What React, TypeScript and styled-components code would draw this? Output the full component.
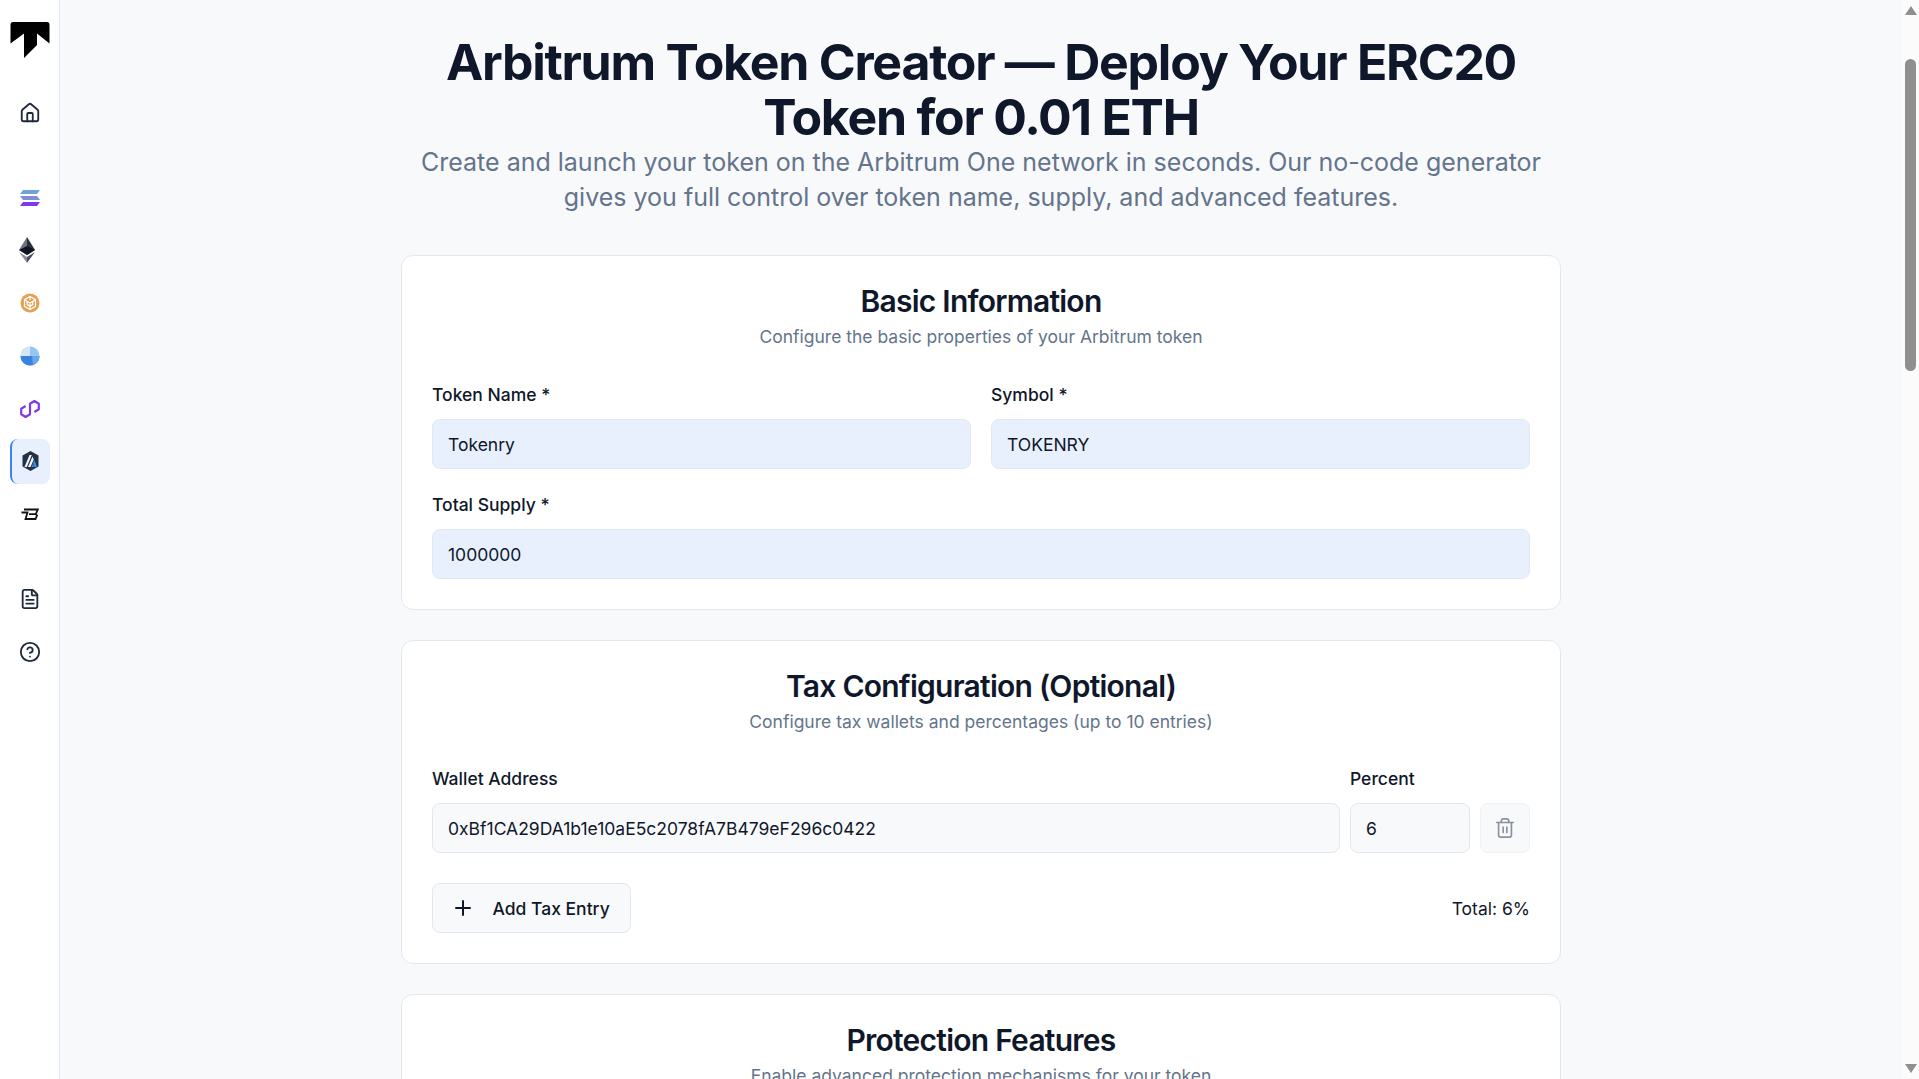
import React from 'react';
import styled, { createGlobalStyle } from 'styled-components';
import { House, FileText, CircleHelp, Trash2, Plus } from 'lucide-react';

const GlobalStyle = createGlobalStyle`
  * {
    box-sizing: border-box;
  }

  body {
    margin: 0;
    background-color: #f8f9fb;
    color: #0f172a;
    font-family: Inter, "Noto Sans", sans-serif;
  }
`;

const Layout = styled.div`
  display: flex;
  height: 100vh;
  overflow: hidden;
`;

const Sidebar = styled.aside`
  flex: 0 0 60px;
  display: flex;
  flex-direction: column;
  align-items: center;
  gap: 40px;
  padding-top: 22px;
  background-color: white;
  border-right: 1px solid #e2e8f0;
`;

const NavGroup = styled.nav`
  display: flex;
  flex-direction: column;
  gap: 7.8px;
  width: 100%;
  align-items: center;
`;

const TopGroup = styled(NavGroup)`
  margin-top: -8px;
`;

const NavItem = styled.div<{ $active?: boolean }>`
  width: 40px;
  height: 45px;
  display: flex;
  align-items: center;
  justify-content: center;
  color: #1e293b;
  border-radius: 8px;
  background-color: ${props => (props.$active ? '#e8f0fe' : 'transparent')};
  border-left: ${props => (props.$active ? '2px solid #3b82f6' : '0')};
`;

const Logo = styled.svg`
  width: 40px;
  height: 37px;
  margin-bottom: -1px;
`;

const EthSvg = styled.svg`
  margin-right: 5px;
`;

const Main = styled.main`
  flex: 1;
  min-width: 0;
  display: flex;
  flex-direction: column;
  align-items: center;
`;

const ScrollRail = styled.div`
  flex: 0 0 17px;
  display: flex;
  flex-direction: column;
  align-items: center;
  padding: 6px 0;
  background-color: #fbfbfc;
`;

const ScrollArrow = styled.div<{ $down?: boolean }>`
  width: 0;
  height: 0;
  border-left: 6px solid transparent;
  border-right: 6px solid transparent;
  border-bottom: ${props => (props.$down ? '0' : '9.5px solid #8f8f8f')};
  border-top: ${props => (props.$down ? '9.5px solid #8f8f8f' : '0')};
`;

const ScrollThumb = styled.div`
  width: 11px;
  height: 312px;
  margin: 43.5px 0 auto;
  background-color: #8f8f8f;
  border-radius: 6px;
`;

const Content = styled.div`
  width: 1160px;
  flex-shrink: 0;
  display: flex;
  flex-direction: column;
  gap: 30px;
`;

const Hero = styled.header`
  padding-top: 35px;
  margin-bottom: 10px;
  text-align: center;
`;

const Title = styled.h1`
  margin: 0;
  font-size: 50px;
  line-height: 55px;
  font-weight: 700;
  letter-spacing: -1.25px;
  color: #0f172a;
`;

const Subtitle = styled.p`
  margin: 0;
  font-size: 25px;
  line-height: 35px;
  color: #64748b;
`;

const Card = styled.section<{ $minHeight?: number }>`
  padding: 27px 30px 30px;
  background-color: white;
  border: 1px solid #e2e8f0;
  border-radius: 12px;
  min-height: ${props => props.$minHeight ?? 0}px;
`;

const CardHeader = styled.div`
  text-align: center;
  margin-bottom: 29px;
`;

const CardTitle = styled.h2`
  margin: 0;
  font-size: 30px;
  line-height: 36px;
  font-weight: 600;
  letter-spacing: -0.75px;
  color: #0f172a;
`;

const CardText = styled.p`
  margin: 0;
  font-size: 17.5px;
  line-height: 36px;
  color: #64748b;
`;

const FieldGrid = styled.div`
  display: grid;
  grid-template-columns: 1fr 1fr;
  gap: 25px 20px;
`;

const Field = styled.label<{ $wide?: boolean }>`
  display: flex;
  flex-direction: column;
  gap: 14px;
  grid-column: ${props => (props.$wide ? '1 / -1' : 'auto')};
`;

const Label = styled.span`
  font-size: 17.5px;
  line-height: 21px;
  font-weight: 500;
  color: #0f172a;
`;

const Input = styled.input<{ $filled?: boolean }>`
  width: 100%;
  height: 50px;
  padding: 0 15px;
  font-family: inherit;
  font-size: 17.5px;
  color: #0f172a;
  background-color: ${props => (props.$filled ? '#e8f0fe' : '#f8f9fb')};
  border: 1px solid #e2e8f0;
  border-radius: 8px;
`;

const TaxRow = styled.div`
  display: grid;
  grid-template-columns: 1fr 120px 50px;
  align-items: end;
  gap: 10px;
  margin-top: -1px;
`;

const IconButton = styled.button`
  width: 50px;
  height: 50px;
  display: flex;
  align-items: center;
  justify-content: center;
  padding: 0;
  color: #8b929e;
  background-color: #f8f9fb;
  border: 1px solid #eef1f5;
  border-radius: 8px;
`;

const TaxFooter = styled.div`
  display: flex;
  justify-content: space-between;
  align-items: center;
  margin-top: 30px;
`;

const AddButton = styled.button`
  height: 50px;
  display: flex;
  align-items: center;
  gap: 17.5px;
  padding: 0 20.5px 0 18px;
  font-family: inherit;
  font-size: 17.5px;
  font-weight: 500;
  color: #0f172a;
  background-color: #f8f9fb;
  border: 1px solid #e2e8f0;
  border-radius: 8px;
`;

const Total = styled.span`
  font-size: 17.5px;
  color: #0f172a;
`;

const SolanaIcon = () => (
  <svg width="20" height="16" viewBox="0 0 20 16">
    <path d="M3 0H20L17 4H0Z" fill="#6ea4d8" />
    <path d="M0 6H17L20 10H3Z" fill="#7d8fd8" />
    <path d="M3 12H20L17 16H0Z" fill="#7c3aed" />
  </svg>
);

const EthIcon = () => (
  <EthSvg width="16" height="26" viewBox="0 0 16 26">
    <path d="M8 0L0 13L8 18Z" fill="#6b7280" />
    <path d="M8 0L16 13L8 18Z" fill="#2a2f3c" />
    <path d="M8 9L0 13L8 18L16 13Z" fill="#12151f" />
    <path d="M0 15L8 26V20Z" fill="#8a8f99" />
    <path d="M8 20V26L16 15Z" fill="#4b505c" />
  </EthSvg>
);

const BnbIcon = () => (
  <svg width="20" height="20" viewBox="0 0 20 20">
    <circle cx="10" cy="10" r="9.5" fill="#e5a052" />
    <path
      d="M10 3.5L15.5 6.7V13.3L10 16.5L4.5 13.3V6.7Z M10 3.5V7 M4.5 6.7L10 10L15.5 6.7 M10 10V16.5 M7.2 8.4V11.6L10 13.2L12.8 11.6V8.4"
      fill="none"
      stroke="white"
      strokeWidth="1.2"
    />
  </svg>
);

const BlueIcon = () => (
  <svg width="20" height="20" viewBox="0 0 20 20">
    <circle cx="10" cy="10" r="9.500" fill="#92c6f5" />
    <path d="M0.500 10A9.500 9.500 0 0 1 10 0.500V10Z" fill="#d5e6f8" />
    <path d="M0.500 10H19.500A9.500 9.500 0 0 1 0.500 10Z" fill="#3b82e0" />
    <path d="M12 10H19.500A9.500 9.500 0 0 1 13 19Z" fill="#6aa8ec" />
  </svg>
);

const PolygonIcon = () => (
  <svg width="20" height="18" viewBox="0 0 20 18">
    <path
      d="M14.400 12L18.800 9.250V3.750L14.400 1L10 3.750V14.250L5.600 17L1.200 14.250V8.750L5.600 6"
      fill="none"
      stroke="#7c3aed"
      strokeWidth="2.200"
      strokeLinejoin="round"
    />
  </svg>
);

const ArbitrumIcon = () => (
  <svg width="17" height="20" viewBox="0 0 17 20">
    <path d="M8.500 0L16.500 4.500V15.500L8.500 20L0.500 15.500V4.500Z" fill="#213147" />
    <path d="M2.500 16L7.500 4H9.800L4.800 16Z M6 16L10.500 5.500L11.700 8.500L8.500 16Z" fill="#f4f6fa" />
    <path d="M11 12L12.500 9L15 16H12.500Z" fill="#3b8ee8" />
    <path d="M9.500 16L11 12.500L12 16Z" fill="#3b8ee8" />
  </svg>
);

const BlastIcon = () => (
  <svg width="20" height="13" viewBox="0 0 20 13">
    <path
      d="M1.500 4.500H7.500L5.500 11H15.500L17 7.500L15.800 6L17.800 1.500H4 M9 6.200H15"
      fill="none"
      stroke="#111"
      strokeWidth="1.800"
    />
  </svg>
);

export default function App() {
  return (
    <Layout>
      <GlobalStyle />
      <Sidebar>
        <Logo viewBox="0 0 40 37">
          <path
            d="M3 0H37Q39.500 0 39.500 3V21.500L27 11.500V23L14 36V11.500L0.500 21.500V3Q0.500 0 3 0Z"
            fill="#000"
          />
        </Logo>
        <TopGroup>
          <NavItem>
            <House size={22} strokeWidth={2} />
          </NavItem>
        </TopGroup>
        <NavGroup>
          <NavItem><SolanaIcon /></NavItem>
          <NavItem><EthIcon /></NavItem>
          <NavItem><BnbIcon /></NavItem>
          <NavItem><BlueIcon /></NavItem>
          <NavItem><PolygonIcon /></NavItem>
          <NavItem $active><ArbitrumIcon /></NavItem>
          <NavItem><BlastIcon /></NavItem>
        </NavGroup>
        <NavGroup>
          <NavItem>
            <FileText size={22} strokeWidth={2} />
          </NavItem>
          <NavItem>
            <CircleHelp size={22} strokeWidth={2} />
          </NavItem>
        </NavGroup>
      </Sidebar>
      <Main>
        <Content>
          <Hero>
            <Title>Arbitrum Token Creator — Deploy Your ERC20 Token for 0.01 ETH</Title>
            <Subtitle>
              Create and launch your token on the Arbitrum One network in seconds. Our no-code
              generator gives you full control over token name, supply, and advanced features.
            </Subtitle>
          </Hero>

          <Card>
            <CardHeader>
              <CardTitle>Basic Information</CardTitle>
              <CardText>Configure the basic properties of your Arbitrum token</CardText>
            </CardHeader>
            <FieldGrid>
              <Field>
                <Label>Token Name *</Label>
                <Input $filled defaultValue="Tokenry" />
              </Field>
              <Field>
                <Label>Symbol *</Label>
                <Input $filled defaultValue="TOKENRY" />
              </Field>
              <Field $wide>
                <Label>Total Supply *</Label>
                <Input $filled defaultValue="1000000" />
              </Field>
            </FieldGrid>
          </Card>

          <Card>
            <CardHeader>
              <CardTitle>Tax Configuration (Optional)</CardTitle>
              <CardText>Configure tax wallets and percentages (up to 10 entries)</CardText>
            </CardHeader>
            <TaxRow>
              <Field>
                <Label>Wallet Address</Label>
                <Input defaultValue="0xBf1CA29DA1b1e10aE5c2078fA7B479eF296c0422" />
              </Field>
              <Field>
                <Label>Percent</Label>
                <Input defaultValue="6" />
              </Field>
              <IconButton aria-label="Remove">
                <Trash2 size={22} strokeWidth={1.8} />
              </IconButton>
            </TaxRow>
            <TaxFooter>
              <AddButton>
                <Plus size={24} strokeWidth={2} />
                Add Tax Entry
              </AddButton>
              <Total>Total: 6%</Total>
            </TaxFooter>
          </Card>

          <Card $minHeight={600}>
            <CardHeader>
              <CardTitle>Protection Features</CardTitle>
              <CardText>Enable advanced protection mechanisms for your token</CardText>
            </CardHeader>
          </Card>
        </Content>
      </Main>
      <ScrollRail>
        <ScrollArrow />
        <ScrollThumb />
        <ScrollArrow $down />
      </ScrollRail>
    </Layout>
  );
}
